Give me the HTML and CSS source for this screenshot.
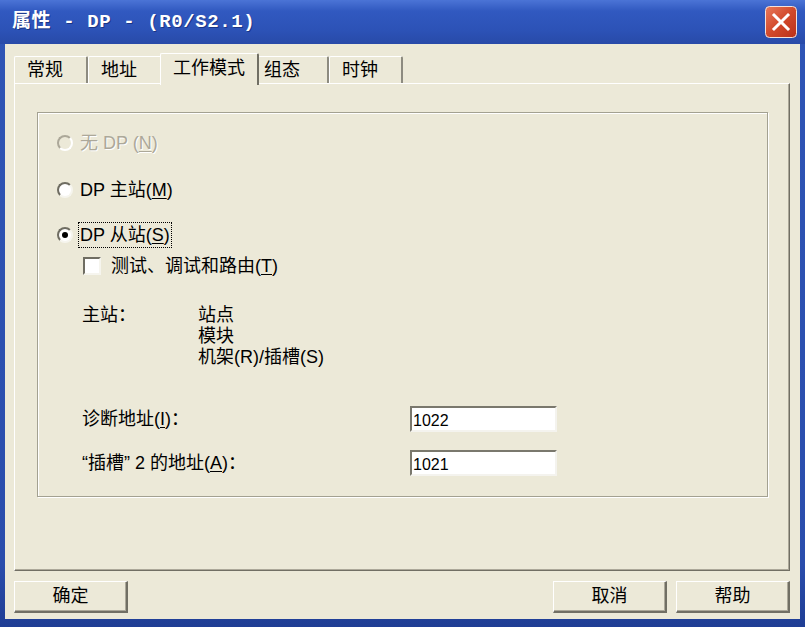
FILE: index.html
```html
<!DOCTYPE html>
<html lang="zh-CN">
<head>
    <meta charset="UTF-8">
    <title>属性 - DP - (R0/S2.1)</title>
    <link rel="stylesheet" href="styles.css">
</head>
<body>
    <div class="window">
        <!-- Title Bar -->
        <div class="titlebar">
            <span class="title">属性 - DP - (R0/S2.1)</span>
            <svg class="close" width="32" height="32" viewBox="0 0 32 32">
                <defs>
                    <linearGradient id="red" x1="0" y1="0" x2="1" y2="1">
                        <stop offset="0" stop-color="#e87a5c"/>
                        <stop offset="0.5" stop-color="#d2492b"/>
                        <stop offset="1" stop-color="#b9301a"/>
                    </linearGradient>
                </defs>
                <rect x="0.5" y="0.5" width="31" height="31" rx="4" fill="url(#red)" stroke="#f3e2dc"/>
                <path d="M9 9 L23 23 M23 9 L9 23" stroke="#fff" stroke-width="3" stroke-linecap="square"/>
            </svg>
        </div>

        <div class="client">
            <!-- Tabs -->
            <div class="tabs">
                <div class="tab">常规</div>
                <div class="tab">地址</div>
                <div class="tab active">工作模式</div>
                <div class="tab">组态</div>
                <div class="tab">时钟</div>
            </div>

            <!-- Tab Panel -->
            <div class="panel">
                <div class="groupbox">
                    <div class="row radio-row disabled">
                        <span class="radio"></span>
                        <span>无 DP (<u>N</u>)</span>
                    </div>
                    <div class="row radio-row second">
                        <span class="radio"></span>
                        <span>DP 主站(<u>M</u>)</span>
                    </div>
                    <div class="row radio-row third">
                        <span class="radio checked"></span>
                        <span class="focus">DP 从站(<u>S</u>)</span>
                    </div>
                    <div class="row check-row">
                        <span class="checkbox"></span>
                        <span>测试、调试和路由(<u>T</u>)</span>
                    </div>

                    <div class="master">
                        <div class="master-label">主站：</div>
                        <div class="master-list">
                            <div>站点</div>
                            <div>模块</div>
                            <div>机架(R)/插槽(S)</div>
                        </div>
                    </div>

                    <div class="field diag">
                        <label class="field-label">诊断地址(<u>I</u>)：</label>
                        <div class="input">1022</div>
                    </div>
                    <div class="field slot">
                        <label class="field-label">“插槽” 2 的地址(<u>A</u>)：</label>
                        <div class="input">1021</div>
                    </div>
                </div>
            </div>

            <!-- Buttons -->
            <div class="buttons">
                <div class="btn">确定</div>
                <div class="btn-group">
                    <div class="btn">取消</div>
                    <div class="btn">帮助</div>
                </div>
            </div>
        </div>
    </div>
</body>
</html>
```

FILE: styles.css
```css
/* General Styling */
* {
    box-sizing: border-box;
    margin: 0;
    padding: 0;
}

body {
    width: 805px;
    height: 627px;
    overflow: hidden;
    font-family: "Liberation Sans", "Noto Sans CJK SC", sans-serif;
    font-size: 18px;
    color: #000;
}

u {
    text-decoration: underline;
    text-underline-offset: 2px;
}

/* Window Frame */
.window {
    width: 805px;
    height: 627px;
    display: flex;
    flex-direction: column;
    background: linear-gradient(to bottom, #2f55b6, #2a4dac 90%, #1f3d94);
}

.titlebar {
    height: 44px;
    display: flex;
    align-items: center;
    justify-content: space-between;
    padding: 0 8px 0 12px;
    background: linear-gradient(to bottom, #4b74d6, #3159c0 25%, #2c52b6 70%, #284aa8);
    color: #fff;
}

.title {
    font-family: "Liberation Mono", "Noto Sans CJK SC", monospace;
    font-weight: bold;
    font-size: 19px;
    letter-spacing: 0.6px;
    line-height: 24px;
    text-shadow: 1px 1px 0 #1a3585;
}

.close {
    display: block;
}

.client {
    flex: 1;
    margin: 0 5px 8px;
    padding: 9px 0 0 9px;
    background: #ece9d8;
    display: flex;
    flex-direction: column;
}

/* Tabs */
.tabs {
    height: 30px;
    display: flex;
    align-items: flex-end;
    position: relative;
    z-index: 1;
}

.tab {
    height: 27px;
    line-height: 26px;
    padding: 0 23px 0 12px;
    background: #ece9d8;
    border-top: 1px solid #fff;
    border-left: 1px solid #fff;
    border-right: 2px solid #8d8b80;
    border-radius: 2px 2px 0 0;
}

.tab.active {
    height: 32px;
    line-height: 28px;
    margin: 0 -1px -2px -2px;
    padding: 0 12px;
    border-right: 2px solid #716f64;
    position: relative;
}

.tab.active + .tab {
    border-left: none;
    padding-left: 6px;
    padding-right: 27px;
}

/* Tab Panel */
.panel {
    width: 776px;
    height: 488px;
    border-top: 1px solid #fff;
    border-left: 1px solid #fff;
    border-right: 1px solid #716f64;
    border-bottom: 1px solid #716f64;
    box-shadow: inset -1px -1px 0 #aca899;
    padding: 28px 0 0 22px;
}

/* Group Box */
.groupbox {
    width: 731px;
    height: 385px;
    border: 1px solid #a3a191;
    box-shadow: 1px 1px 0 #fff, inset 1px 1px 0 #fff;
    padding: 18px 0 0 19px;
}

.row {
    height: 24px;
    display: flex;
    align-items: center;
    line-height: 22px;
}

.radio-row.second {
    margin-top: 23px;
}

.radio-row.third {
    margin-top: 21px;
}

.radio {
    width: 16px;
    height: 16px;
    margin-right: 7px;
    border-radius: 50%;
    background: #fff;
    border: 2px solid;
    border-color: #6f6d62 #f6f5ee #f6f5ee #6f6d62;
    position: relative;
}

.radio.checked::after {
    content: '';
    position: absolute;
    left: 3px;
    top: 3px;
    width: 6px;
    height: 6px;
    border-radius: 50%;
    background: #000;
}

.disabled {
    color: #aca899;
    text-shadow: 1px 1px 0 #fff;
}

.disabled .radio {
    background: #ece9d8;
    border-color: #aca899 #fff #fff #aca899;
}

.focus {
    outline: 1px dotted #000;
    outline-offset: 1px;
}

/* Checkbox */
.check-row {
    margin-top: 7px;
    padding-left: 26px;
}

.checkbox {
    width: 18px;
    height: 18px;
    margin-right: 10px;
    background: #fff;
    border: 2px solid;
    border-color: #6f6d62 #f6f5ee #f6f5ee #6f6d62;
}

/* Master Info */
.master {
    display: flex;
    margin-top: 27px;
    padding-left: 25px;
    line-height: 21px;
}

.master-label {
    width: 116px;
}

/* Address Fields */
.field {
    display: flex;
    align-items: center;
    padding-left: 25px;
    height: 26px;
}

.field.diag {
    margin-top: 38px;
}

.field.slot {
    margin-top: 18px;
}

.field-label {
    width: 328px;
    line-height: 22px;
}

.input {
    width: 147px;
    height: 26px;
    background: #fff;
    border: 2px solid;
    border-color: #7a786d #f4f3ee #f4f3ee #7a786d;
    font-size: 16px;
    line-height: 25px;
    padding-left: 1px;
}

/* Buttons */
.buttons {
    width: 776px;
    margin-top: 10px;
    display: flex;
    justify-content: space-between;
}

.btn-group {
    display: flex;
    gap: 9px;
}

.btn {
    width: 114px;
    height: 32px;
    line-height: 28px;
    text-align: center;
    background: #ece9d8;
    border-top: 1px solid #fff;
    border-left: 1px solid #fff;
    border-right: 2px solid #716f64;
    border-bottom: 2px solid #716f64;
    box-shadow: inset -1px -1px 0 #aca899;
}
```
